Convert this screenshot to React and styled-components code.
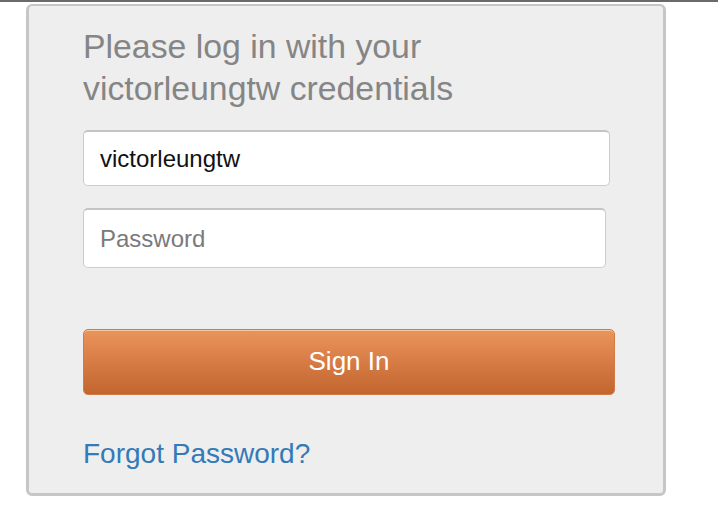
import React from 'react';
import styled, { createGlobalStyle } from 'styled-components';

const GlobalStyle = createGlobalStyle`
	html, body {
		margin: 0;
		padding: 0;
		background: #fff;
		font-family: 'Liberation Sans', Arial, sans-serif;
	}
`;

const Page = styled.div`
	border-top: 2px solid #6a6a6a;
	padding: 2px 0 0 26px;
`;

const Panel = styled.div`
	box-sizing: border-box;
	width: 640px;
	height: 492px;
	background: #eeeeee;
	border: 3px solid #c6c6c6;
	border-top-width: 2px;
	border-radius: 6px;
	padding: 19px 0 0 54px;
	display: flex;
	flex-direction: column;
`;

const Heading = styled.h2`
	margin: 0;
	font-weight: normal;
	font-size: 33.8px;
	line-height: 42px;
	color: #858585;
	white-space: nowrap;
`;

const Field = styled.input`
	box-sizing: border-box;
	width: ${(p) => p.$width}px;
	height: ${(p) => p.$height}px;
	margin-top: ${(p) => p.$top}px;
	padding: 0 16px;
	font-family: 'Liberation Sans', Arial, sans-serif;
	font-size: 24px;
	color: #111;
	background: #fff;
	border: 1px solid #cccccc;
	border-top: 2px solid #c4c4c4;
	border-radius: 5px;
	outline: none;
	&::placeholder {
		color: #7a7a7a;
	}
`;

const Button = styled.button`
	box-sizing: border-box;
	width: 532px;
	height: 66px;
	margin-top: 61px;
	padding-bottom: 3px;
	font-family: 'Liberation Sans', Arial, sans-serif;
	font-size: 26px;
	color: #fff;
	background: linear-gradient(to bottom, #e9955a 0%, #d97e48 45%, #c2652e 100%);
	border: 1px solid #d47a45;
	border-radius: 5px;
	box-shadow: inset 0 1px 0 rgba(255, 220, 190, 0.7);
	cursor: pointer;
`;

const Forgot = styled.a`
	margin-top: 44px;
	font-size: 28px;
	line-height: 30px;
	color: #337ab7;
	text-decoration: none;
	align-self: flex-start;
`;

export default function App() {
	return (
		<>
			<GlobalStyle />
			<Page>
				<Panel>
					<Heading>
						Please log in with your
						<br />
						victorleungtw credentials
					</Heading>
					<Field $width={527} $height={56} $top={21} defaultValue="victorleungtw" />
					<Field $width={523} $height={60} $top={22} type="password" placeholder="Password" />
					<Button>Sign In</Button>
					<Forgot href="#">Forgot Password?</Forgot>
				</Panel>
			</Page>
		</>
	);
}
